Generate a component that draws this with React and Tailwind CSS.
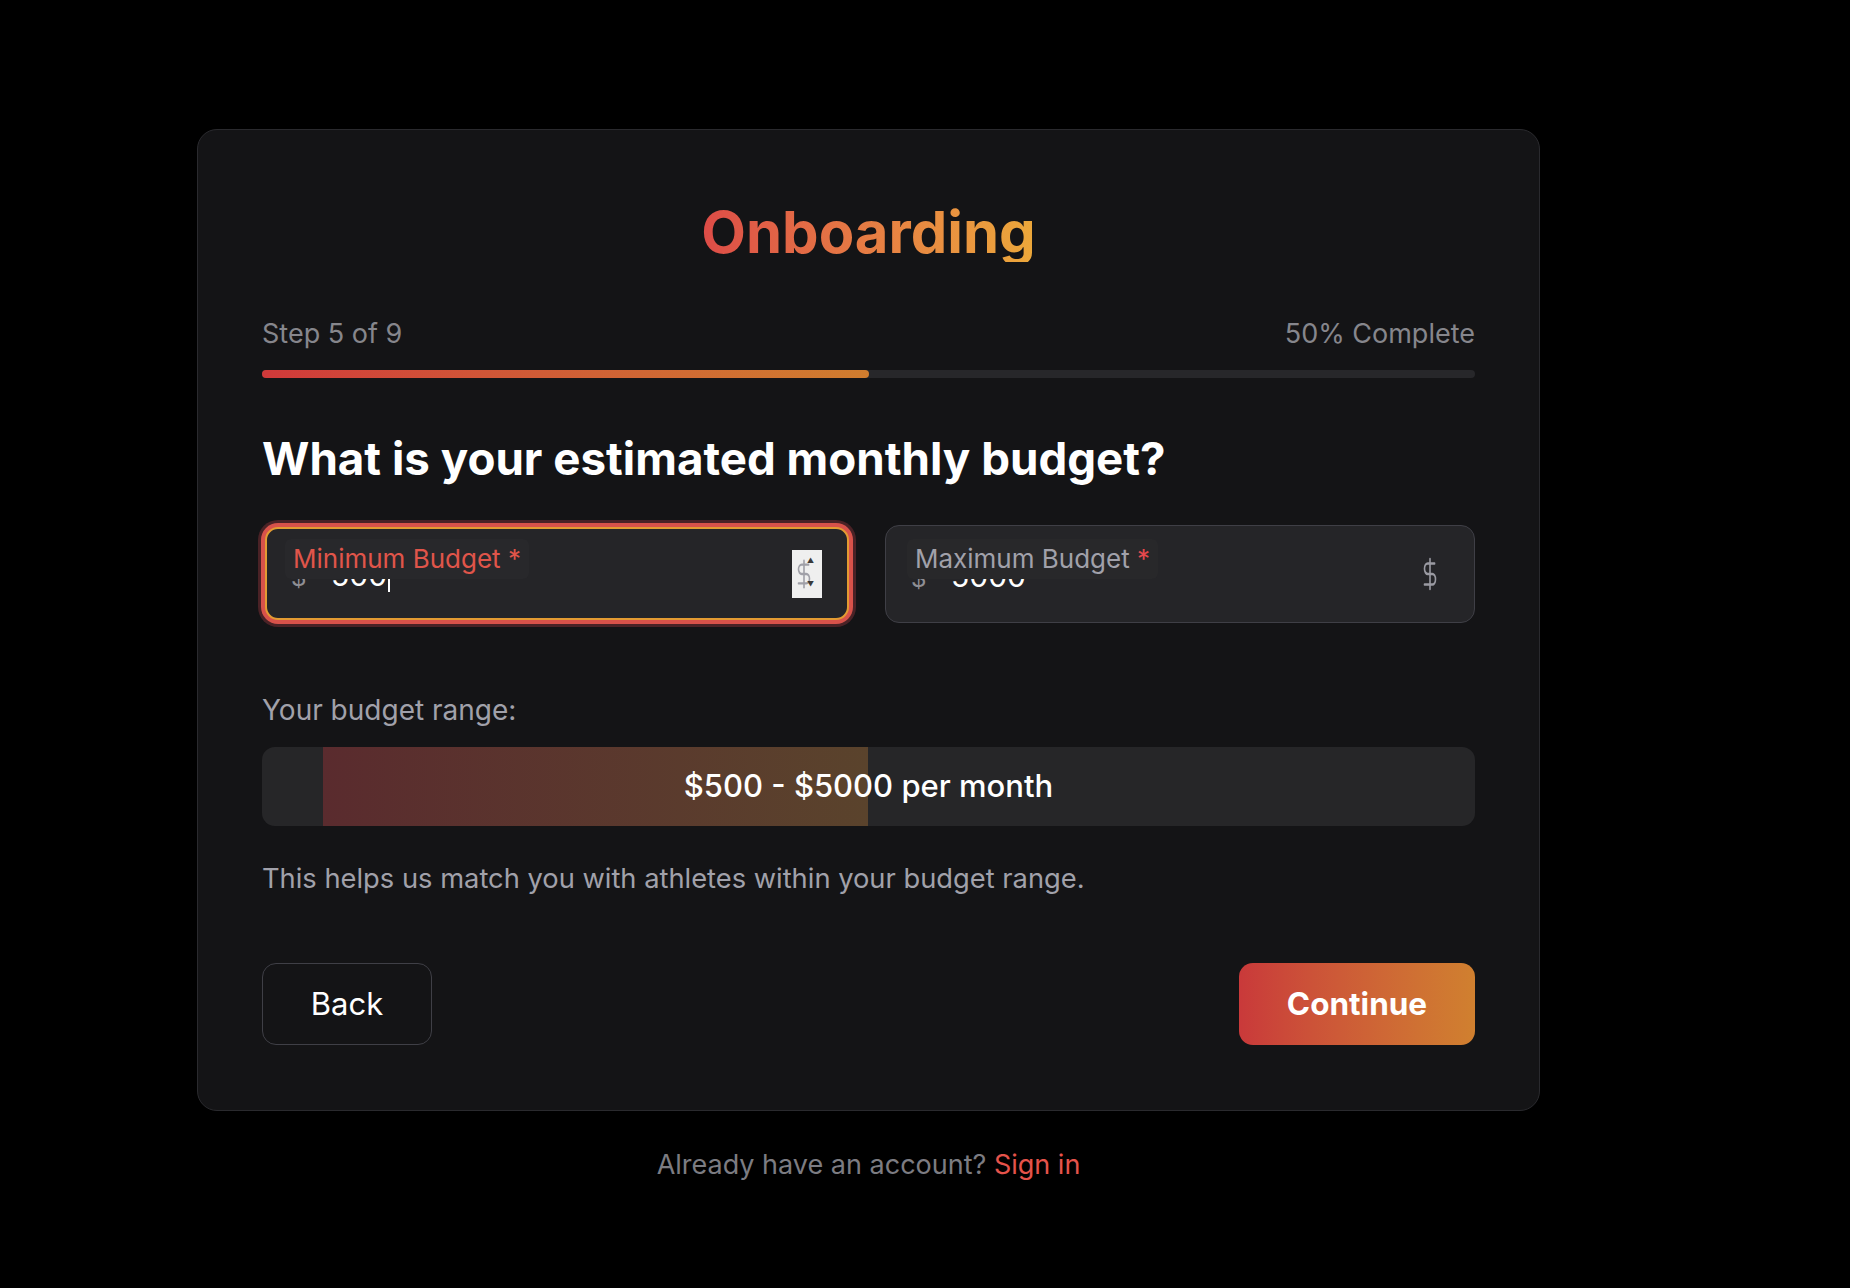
import React from "react";

function DollarIcon({ className = "", strokeWidth = 1.75 }) {
  return (
    <svg viewBox="0 0 24 24" fill="none" stroke="currentColor" strokeWidth={strokeWidth} strokeLinecap="round" strokeLinejoin="round" className={className} preserveAspectRatio="none">
      <line x1="12" y1="2" x2="12" y2="22" />
      <path d="M17 5H9.5a3.5 3.5 0 0 0 0 7h5a3.5 3.5 0 0 1 0 7H6" />
    </svg>
  );
}

function Value({ children, caret = false }) {
  return (
    <div className="mt-[6px] flex items-baseline leading-[32px]">
      <span className="w-[40px] text-[24px] text-[#8e8e94]">$</span>
      <span className="text-[30px] text-white">{children}</span>
      {caret && <span className="ml-[1px] inline-block h-[30px] w-[1.5px] self-center bg-white" />}
    </div>
  );
}

export default function App() {
  return (
    <div className="min-h-screen bg-black pt-[129px] font-['Inter',sans-serif]">
      <div className="ml-[197px] flex w-[1343px] flex-col gap-[38px]">
        <div className="flex flex-col rounded-[20px] border border-[#2a2a2e] bg-[#141416] px-[64px] pt-[72px] pb-[65px]">
          <h1 className="mx-auto w-fit bg-gradient-to-r from-[#dd4b47] to-[#eca83a] bg-clip-text text-center text-[58px] font-bold leading-[60px] text-transparent">
            Onboarding
          </h1>

          <div className="mt-[56px] flex flex-col gap-[20px]">
            <div className="flex items-center justify-between text-[27px] leading-[32px] text-[#86868c]">
              <span>Step 5 of 9</span>
              <span>50% Complete</span>
            </div>
            <div className="h-[8px] w-full rounded-full bg-[#27272a]">
              <div className="h-full w-1/2 rounded-full bg-gradient-to-r from-[#d0393a] to-[#d07d2e]" />
            </div>
          </div>

          <h2 className="mt-[56px] text-[45.7px] font-bold leading-[50px] text-white">
            What is your estimated monthly budget?
          </h2>

          <div className="mt-[41px] grid grid-cols-2 gap-[33px]">
            {/* Minimum (focused) */}
            <div className="h-[98px] px-[3px] pt-[2px] pb-[3px]">
              <div className="relative flex h-full items-center justify-between rounded-[13px] border-2 border-[#e39b32] bg-[#252528] pl-[24px] pr-[25px] shadow-[0_0_0_4px_#d8524a,0_0_0_7px_#4a2226]">
                <Value caret>500</Value>
                <div className="relative h-[48px] w-[30px] bg-[#efefef]">
                  <DollarIcon className="ml-[1px] mt-[8px] h-[32px] w-[22px] text-[#a0a0a8]" />
                  <span className="absolute right-[8px] top-[7px] text-[7px] leading-none text-[#3a3a3a]">▲</span>
                  <span className="absolute bottom-[10px] right-[8px] text-[7px] leading-none text-[#3a3a3a]">▼</span>
                </div>
                <div className="absolute left-[18px] top-[10px] rounded-[6px] bg-[#28282b] px-[8px] text-[26px] leading-[40px] text-[#e0554a]">
                  Minimum Budget *
                </div>
              </div>
            </div>

            {/* Maximum */}
            <div className="relative flex h-[98px] items-center justify-between rounded-[14px] border border-[#3f3f46] bg-[#252528] pl-[25px] pr-[33px]">
              <Value>5000</Value>
              <DollarIcon className="h-[36px] w-[22px] text-[#9a9aa2]" />
              <div className="absolute left-[21px] top-[13px] rounded-[6px] bg-[#28282a] px-[8px] text-[26px] leading-[40px] text-[#a1a1aa]">
                Maximum Budget <span className="text-[#e5484d]">*</span>
              </div>
            </div>
          </div>

          <div className="mt-[71px] flex flex-col gap-[21px]">
            <p className="text-[28px] leading-[32px] text-[#a1a1aa]">Your budget range:</p>
            <div className="relative h-[79px] overflow-hidden rounded-[13px] bg-[#262628]">
              <div className="absolute bottom-0 top-0 left-[5%] w-[45%] bg-gradient-to-r from-[#5a2b2e] to-[#5a432c]" />
              <div className="relative flex h-full items-center justify-center text-[31px] font-medium text-white">
                $500 - $5000 per month
              </div>
            </div>
          </div>
          <p className="mt-[37px] text-[27.3px] leading-[32px] text-[#a1a1aa]">
            This helps us match you with athletes within your budget range.
          </p>

          <div className="mt-[68px] flex items-center justify-between">
            <button className="flex h-[82px] w-[170px] items-center justify-center rounded-[14px] border border-[#3f3f46] bg-transparent text-[31px] text-white">
              Back
            </button>
            <button className="flex h-[82px] w-[236px] items-center justify-center rounded-[14px] bg-gradient-to-r from-[#c9393a] to-[#d0802f] text-[31.5px] font-bold text-white">
              Continue
            </button>
          </div>
        </div>

        <p className="text-center text-[27px] leading-[32px] text-[#7c7c82]">
          Already have an account? <span className="text-[#e5534b]">Sign in</span>
        </p>
      </div>
    </div>
  );
}
